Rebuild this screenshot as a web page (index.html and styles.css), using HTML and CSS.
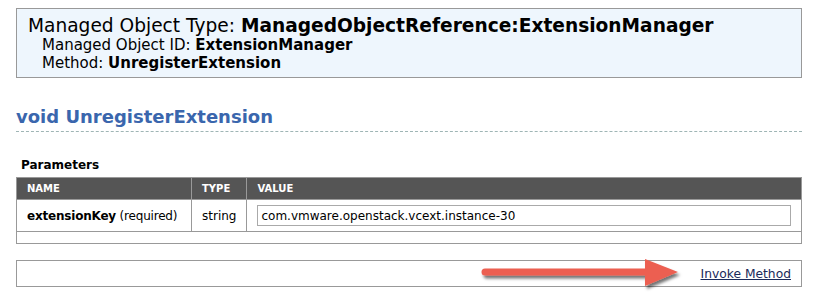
FILE: index.html
```html
<!DOCTYPE html>
<html lang="en">
<head>
  <meta charset="UTF-8">
  <title>UnregisterExtension</title>
  <link rel="stylesheet" href="styles.css">
</head>
<body>

  <div class="objbox">
    <div class="objtype">Managed Object Type: <b>ManagedObjectReference:ExtensionManager</b></div>
    <div class="objline">Managed Object ID: <b>ExtensionManager</b></div>
    <div class="objline">Method: <b>UnregisterExtension</b></div>
  </div>

  <h1 class="method">void UnregisterExtension</h1>

  <h2 class="params">Parameters</h2>
  <table class="ptable">
    <tr>
      <th class="c-name">NAME</th>
      <th class="c-type">TYPE</th>
      <th>VALUE</th>
    </tr>
    <tr>
      <td class="c-name"><b>extensionKey</b> (required)</td>
      <td class="c-type">string</td>
      <td><input type="text" class="valinput" value="com.vmware.openstack.vcext.instance-30"></td>
    </tr>
    <tr class="blank">
      <td colspan="3"></td>
    </tr>
  </table>

  <div class="invoke">
    <svg class="arrow" width="210" height="34" viewBox="0 0 210 34">
      <defs>
        <filter id="sh" x="-10%" y="-50%" width="120%" height="200%">
          <feDropShadow dx="2" dy="3" stdDeviation="1.6" flood-color="#000" flood-opacity="0.55"/>
        </filter>
      </defs>
      <g filter="url(#sh)">
        <line x1="8" y1="14" x2="172" y2="14" stroke="#ec5f51" stroke-width="7" stroke-linecap="round"/>
        <polygon points="168,1 201,14 168,28" fill="#ec5f51"/>
      </g>
    </svg>
    <a href="#" class="invoke-link">Invoke Method</a>
  </div>

</body>
</html>
```

FILE: styles.css
```css
* { box-sizing: border-box; }
body {
  margin: 0;
  padding: 8px 16px;
  font-family: "DejaVu Sans", Verdana, sans-serif;
  color: #000;
  background: #fff;
}

.objbox {
  background-color: #eef6fd;
  border: 1px solid #999;
  padding: 6px 11px 6px;
  height: 70px;
}

.objtype {
  font-size: 18.6px;
  line-height: 21px;
}

.objline {
  font-size: 15px;
  line-height: 18px;
  padding-left: 14px;
}

.method {
  margin: 28px 0 0;
  padding-bottom: 3px;
  font-size: 18px;
  line-height: 22px;
  color: #3a66ad;
  border-bottom: 1px dashed #9fb5b5;
}

.params {
  margin: 26px 0 5px 5px;
  font-size: 12px;
  line-height: 14px;
}

.ptable {
  width: 100%;
  border-collapse: collapse;
  border: 1px solid #999;
  font-size: 12px;
}

.ptable th {
  background-color: #555;
  color: #fff;
  font-size: 10px;
  text-align: left;
  height: 22px;
  padding: 0 10px;
  border: 1px solid #999;
}

.ptable td {
  height: 32px;
  padding: 0 10px;
  border: 1px solid #999;
}

.c-name { width: 175px; white-space: nowrap; }
.c-type { width: 55px; }

.ptable td.c-name { padding-right: 4px; letter-spacing: -0.2px; }

.ptable .blank td { height: 12px; }

.valinput {
  width: 100%;
  height: 21px;
  border: 1px solid #aaa;
  padding: 1px 3px;
  font-family: "DejaVu Sans", Verdana, sans-serif;
  font-size: 12px;
}

.invoke {
  margin-top: 16px;
  border: 1px solid #999;
  height: 27px;
  display: flex;
  justify-content: flex-end;
  align-items: center;
  padding-right: 10px;
  position: relative;
}

.arrow {
  position: absolute;
  left: 460px;
  top: -3px;
}

.invoke-link {
  font-size: 12.3px;
  color: #1a2a5a;
  text-decoration: underline;
}
```
